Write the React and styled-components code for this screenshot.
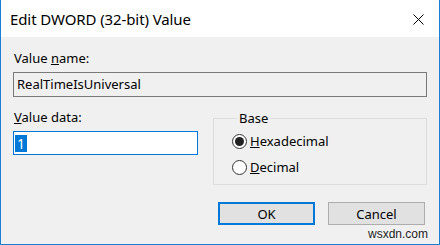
import React from "react";
import styled, { createGlobalStyle } from "styled-components";

const Global = createGlobalStyle`
  html, body { margin: 0; padding: 0; background: #f0f0f0; }
  * { box-sizing: border-box; }
`;

const Window = styled.div`
  position: relative;
  width: 440px;
  height: 245px;
  background: #f0f0f0;
  border-left: 1px solid #1c7fd6;
  border-right: 1px solid #1c7fd6;
  border-bottom: 1px solid #1c7fd6;
  font-family: "Noto Sans", "Open Sans", sans-serif;
  color: #000;
  display: flex;
  flex-direction: column;
  overflow: hidden;
`;

const TitleBar = styled.div`
  height: 37px;
  flex: none;
  background: #fff;
  display: flex;
  align-items: center;
  justify-content: space-between;
  padding: 0 15px 0 9px;
`;

const Title = styled.div`
  font-size: 15px;
  letter-spacing: -0.1px;
  margin-top: 1px;
`;

const Close = styled.svg`
  width: 11px;
  height: 11px;
  margin-top: 2px;
`;

const Body = styled.div`
  flex: 1;
  padding: 13px 12px 0 12px;
  display: flex;
  flex-direction: column;
`;

const Label = styled.div`
  font-size: 13px;
  line-height: 16px;
  height: 16px;
  padding-left: 1px;
`;

const NameField = styled.div`
  margin-top: 6px;
  height: 25px;
  border: 1px solid #7a7a7a;
  background: #f0f0f0;
  font-size: 13px;
  line-height: 23px;
  padding-left: 3px;
`;

const Row = styled.div`
  margin-top: 12px;
  display: flex;
  align-items: flex-start;
  gap: 15px;
`;

const LeftCol = styled.div`
  width: 185px;
  display: flex;
  flex-direction: column;
`;

const DataField = styled.div`
  margin-top: 6px;
  height: 24px;
  border: 1px solid #0078d7;
  background: #fff;
  padding: 2px 1px;
  display: flex;
`;

const Selected = styled.span`
  background: #0078d7;
  color: #fff;
  font-size: 14px;
  line-height: 17px;
  height: 17px;
  padding: 0 2px;
  margin-top: 1px;
`;

const Group = styled.fieldset`
  margin: 0;
  margin-top: 1px;
  flex: 1;
  border: 1px solid #dcdcdc;
  padding: 5px 10px 7px 18px;
  display: flex;
  flex-direction: column;
  gap: 6px;
  min-width: 0;
`;

const Legend = styled.legend`
  font-size: 13px;
  line-height: 16px;
  padding: 0 2px;
  margin-left: 5px;
`;

const RadioRow = styled.label`
  display: flex;
  align-items: center;
  height: 20px;
  font-size: 13px;
  gap: 3px;
`;

const RadioCircle = styled.span`
  width: 15px;
  height: 15px;
  border-radius: 50%;
  border: 1px solid #333;
  background: #fff;
  display: flex;
  align-items: center;
  justify-content: center;
  &::after {
    content: "";
    width: 9px;
    height: 9px;
    border-radius: 50%;
    background: #222;
    display: ${(p) => (p.$checked ? "block" : "none")};
  }
`;

const Buttons = styled.div`
  margin-top: 17px;
  display: flex;
  justify-content: flex-end;
  gap: 13px;
  padding-right: 2px;
`;

const Button = styled.div`
  width: 97px;
  height: 23px;
  background: #e1e1e1;
  border: ${(p) => (p.$default ? "2px solid #0078d7" : "1px solid #adadad")};
  font-size: 13px;
  display: flex;
  align-items: center;
  justify-content: center;
`;

const Watermark = styled.div`
  position: absolute;
  right: 11px;
  bottom: 3px;
  font-family: "Liberation Sans", Arial, sans-serif;
  font-size: 12px;
  color: #1a1a1a;
  text-shadow: 0 0 2px #fff;
`;

export default function App() {
  return (
    <>
      <Global />
      <Window>
        <TitleBar>
          <Title>Edit DWORD (32-bit) Value</Title>
          <Close viewBox="0 0 11 11">
            <path d="M0.5 0.5 L10.5 10.5 M10.5 0.5 L0.5 10.5" stroke="#000" strokeWidth="1" />
          </Close>
        </TitleBar>
        <Body>
          <Label>
            Value <u>n</u>ame:
          </Label>
          <NameField>RealTimeIsUniversal</NameField>
          <Row>
            <LeftCol>
              <Label>
                <u>V</u>alue data:
              </Label>
              <DataField>
                <Selected>1</Selected>
              </DataField>
            </LeftCol>
            <Group>
              <Legend>Base</Legend>
              <RadioRow>
                <RadioCircle $checked />
                <span>
                  <u>H</u>exadecimal
                </span>
              </RadioRow>
              <RadioRow>
                <RadioCircle />
                <span>
                  <u>D</u>ecimal
                </span>
              </RadioRow>
            </Group>
          </Row>
          <Buttons>
            <Button $default>OK</Button>
            <Button>Cancel</Button>
          </Buttons>
        </Body>
        <Watermark>wsxdn.com</Watermark>
      </Window>
    </>
  );
}
